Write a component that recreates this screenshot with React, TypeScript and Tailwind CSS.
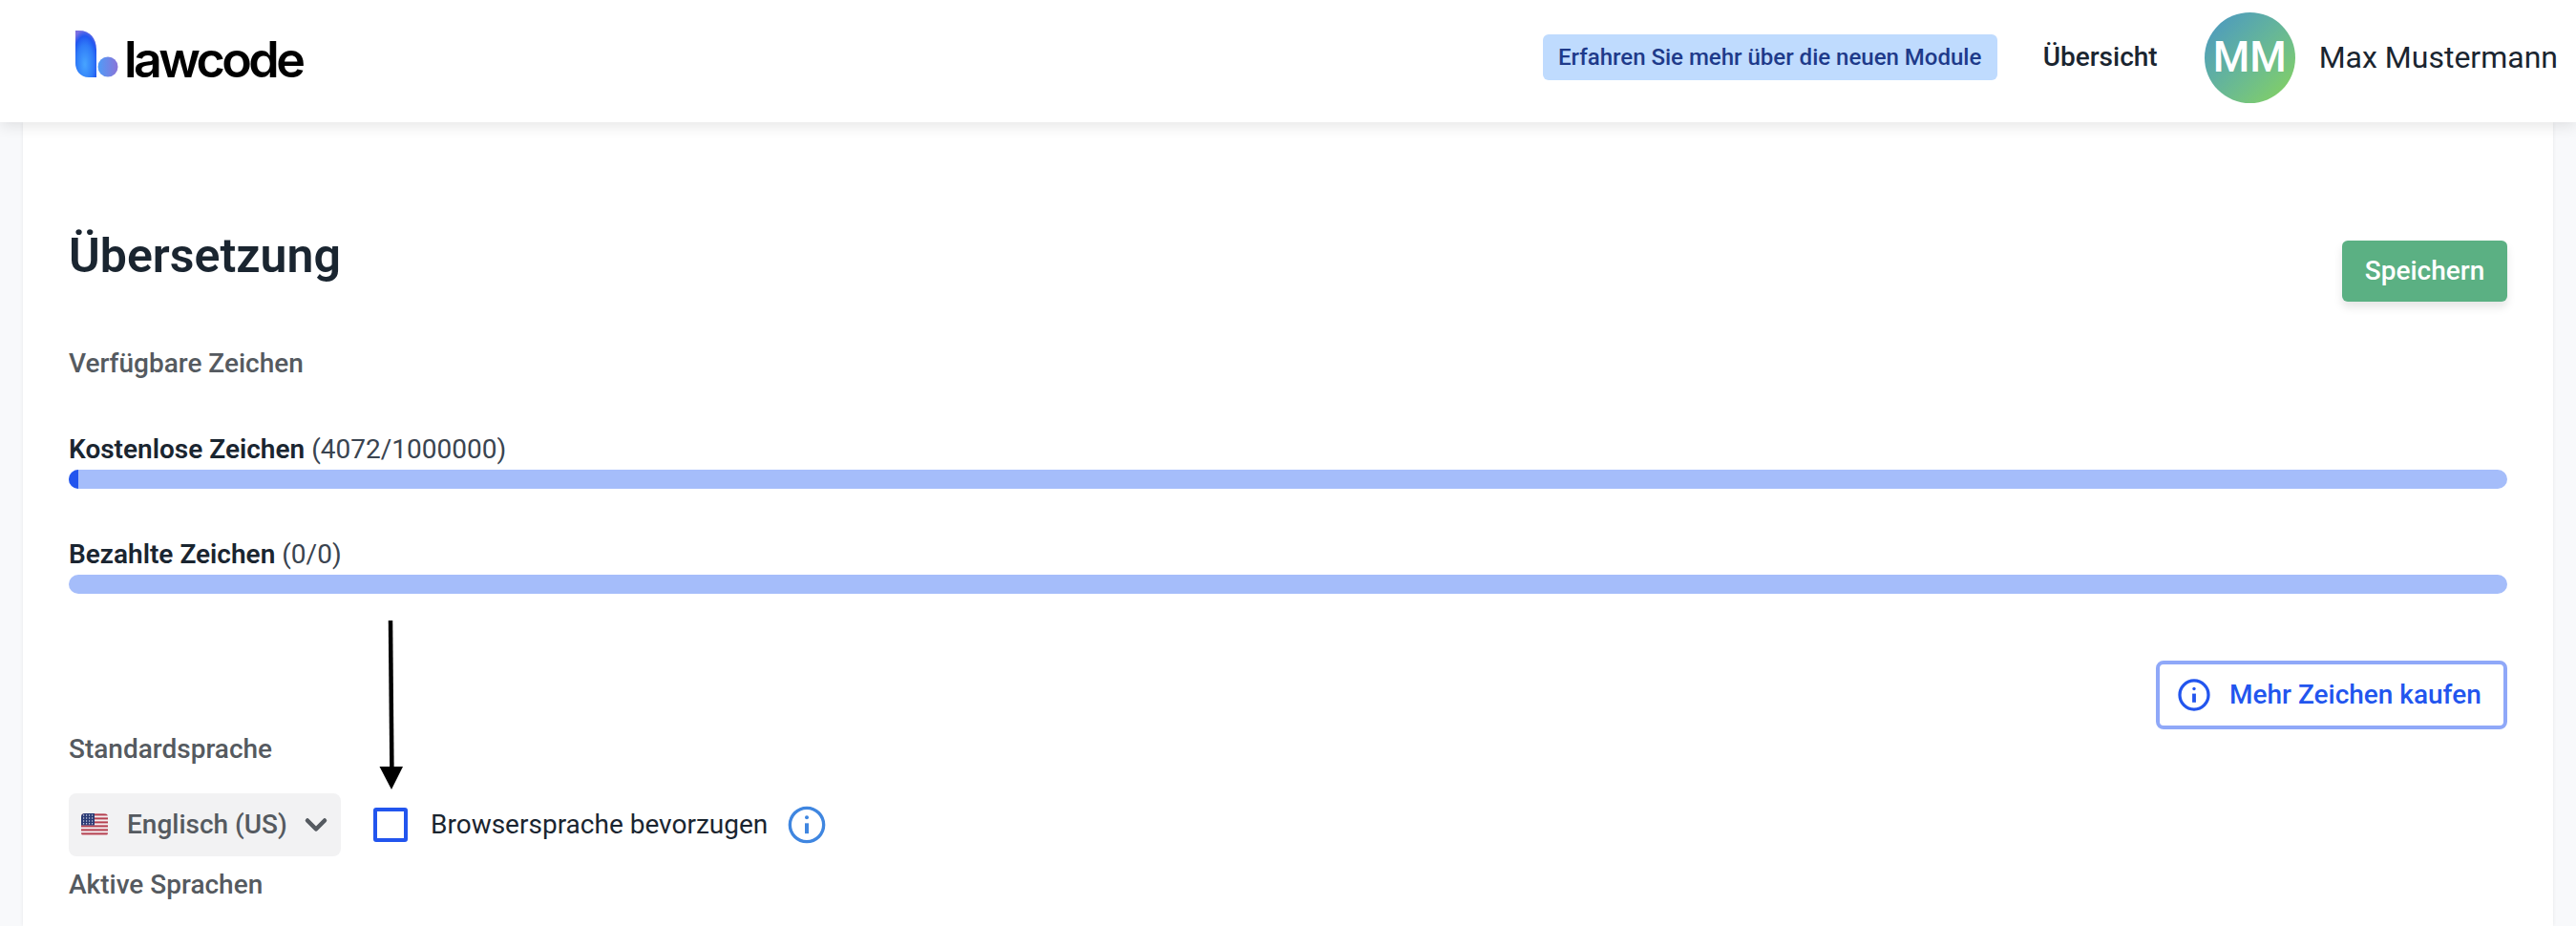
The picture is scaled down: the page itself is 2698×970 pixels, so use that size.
import { ChevronDown } from "lucide-react";

function Logo() {
  return (
    <div className="flex items-end">
      <svg width="46" height="50" viewBox="0 0 46 50" className="mb-[7px] shrink-0">
        <defs>
          <radialGradient id="lg1" cx="0.45" cy="0.72" r="0.75">
            <stop offset="0" stopColor="#47a4ff" />
            <stop offset="0.55" stopColor="#2f7bf8" />
            <stop offset="0.8" stopColor="#2257f0" />
            <stop offset="1" stopColor="#7a6fe0" />
          </radialGradient>
          <linearGradient id="lg2" x1="0" y1="0" x2="1" y2="0">
            <stop offset="0" stopColor="#4f9cf8" />
            <stop offset="1" stopColor="#8a74d8" />
          </linearGradient>
        </defs>
        <path d="M0 0H4C15 0 22 8 22 20V49H14C5 49 0 42 0 34Z" fill="url(#lg1)" />
        <circle cx="34" cy="38" r="10.5" fill="url(#lg2)" />
      </svg>
      <span className="ml-[5px] font-['Inter',sans-serif] text-[52px] font-semibold leading-[52px] tracking-[-3.6px] text-black">
        lawcode
      </span>
    </div>
  );
}

function InfoIcon({ size, color, stroke }: { size: number; color: string; stroke: number }) {
  return (
    <svg width={size} height={size} viewBox="0 0 24 24" fill="none" stroke={color} strokeWidth={stroke} className="shrink-0">
      <circle cx="12" cy="12" r="10.6" />
      <path d="M12 11v6.5" strokeWidth={stroke + 0.4} />
      <circle cx="12" cy="7.4" r="1.2" fill={color} stroke="none" />
    </svg>
  );
}

function UsFlag() {
  return (
    <svg width="28" height="24" viewBox="0 0 28 24" className="shrink-0 rounded-[4px]">
      <rect width="28" height="24" fill="#f4eef0" />
      {[0, 4, 8, 12, 16, 20].map((y) => (
        <rect key={y} y={y + 0.4} width="28" height="2" fill="#b5404f" />
      ))}
      <rect width="14" height="12.5" fill="#2a3a74" />
      {[2, 5, 8, 11].map((x) =>
        [2, 5, 8, 10.8].map((y) => <circle key={`${x}-${y}`} cx={x + 0.6} cy={y} r="0.7" fill="#d8dcec" />)
      )}
    </svg>
  );
}

function UsageBar({ label, value, fill }: { label: string; value: string; fill?: boolean }) {
  return (
    <div>
      <p className="text-[28px] leading-[36px] text-[#1a2530]">
        <span className="font-semibold">{label}</span> <span className="text-[#3a4450]">{value}</span>
      </p>
      <div className="mt-[3px] h-[20px] overflow-hidden rounded-full bg-[#a5bdfa]">
        {fill && <div className="h-full w-[10px] bg-[#2255ee]" />}
      </div>
    </div>
  );
}

export default function App() {
  return (
    <div className="flex h-[970px] flex-col overflow-hidden bg-[#f8f9fb] font-['Roboto',sans-serif]">
      {/* Header */}
      <header className="relative z-10 flex h-[128px] shrink-0 items-center justify-between bg-white pb-[8px] pl-[79px] pr-[19px] shadow-[0_4px_14px_rgba(0,0,0,0.1)]">
        <Logo />
        <div className="flex items-center">
          <a className="flex h-[48px] w-[476px] items-center justify-center rounded-[6px] bg-[#bfdbfe] text-[24px] font-medium text-[#1e3a8a]">
            Erfahren Sie mehr über die neuen Module
          </a>
          <span className="ml-[48px] text-[28px] font-medium text-[#1a2530]">Übersicht</span>
          <div className="ml-[49px] flex h-[95px] w-[95px] items-center justify-center rounded-full bg-gradient-to-br from-[#4a94c4] to-[#88d452] text-[44px] font-medium text-white">
            MM
          </div>
          <span className="ml-[25px] text-[32px] font-normal text-[#1a2530]">Max Mustermann</span>
        </div>
      </header>

      {/* Card */}
      <main className="mx-[24px] flex flex-1 flex-col bg-white px-[48px] pt-[112px] shadow-[0_0_4px_rgba(0,0,0,0.08)]">
        <div className="flex items-start justify-between">
          <h1 className="text-[50px] font-semibold leading-[56px] text-[#1a2530]">Übersetzung</h1>
          <button className="mt-[12px] h-[64px] w-[173px] rounded-[6px] bg-[#5bb083] text-[28px] font-medium text-white shadow-[0_6px_10px_rgba(0,0,0,0.1)]">
            Speichern
          </button>
        </div>

        <p className="mt-[47px] text-[28px] font-medium leading-[36px] text-[#555a60]">Verfügbare Zeichen</p>

        <div className="mt-[54px] flex flex-col gap-[51px]">
          <UsageBar label="Kostenlose Zeichen" value="(4072/1000000)" fill />
          <UsageBar label="Bezahlte Zeichen" value="(0/0)" />
        </div>

        <button className="mt-[70px] flex h-[72px] w-[368px] items-center gap-[20px] self-end rounded-[8px] border-[4px] border-[#8fa8f8] pl-[19px] text-[28px] font-medium text-[#2255ee]">
          <InfoIcon size={34} color="#2255ee" stroke={2.3} />
          Mehr Zeichen kaufen
        </button>

        <p className="mt-[3px] text-[28px] font-medium leading-[36px] text-[#555a60]">Standardsprache</p>

        <div className="mt-[28px] flex items-center">
          <div className="flex h-[66px] w-[285px] items-center rounded-[8px] bg-[#f2f2f3] pl-[13px] pr-[8px]">
            <UsFlag />
            <span className="ml-[20px] text-[28px] font-medium text-[#555a60]">Englisch (US)</span>
            <ChevronDown className="ml-auto text-[#555a60]" size={36} strokeWidth={3} />
          </div>
          <span className="ml-[34px] h-[36px] w-[36px] rounded-[3px] border-[4px] border-[#2255ee]" />
          <span className="ml-[24px] text-[28px] text-[#1a2530]">Browsersprache bevorzugen</span>
          <span className="ml-[21px]">
            <InfoIcon size={40} color="#3f86e0" stroke={2} />
          </span>
        </div>

        <p className="mt-[12px] text-[28px] font-medium leading-[36px] text-[#555a60]">Aktive Sprachen</p>
      </main>

      {/* Annotation arrow */}
      <svg width="30" height="180" viewBox="0 0 30 180" className="absolute left-[395px] top-[650px]">
        <path d="M14 0l1.400 154" stroke="#000" strokeWidth="4.5" fill="none" />
        <path d="M2.500 153H27L15 177Z" fill="#000" />
      </svg>
    </div>
  );
}
